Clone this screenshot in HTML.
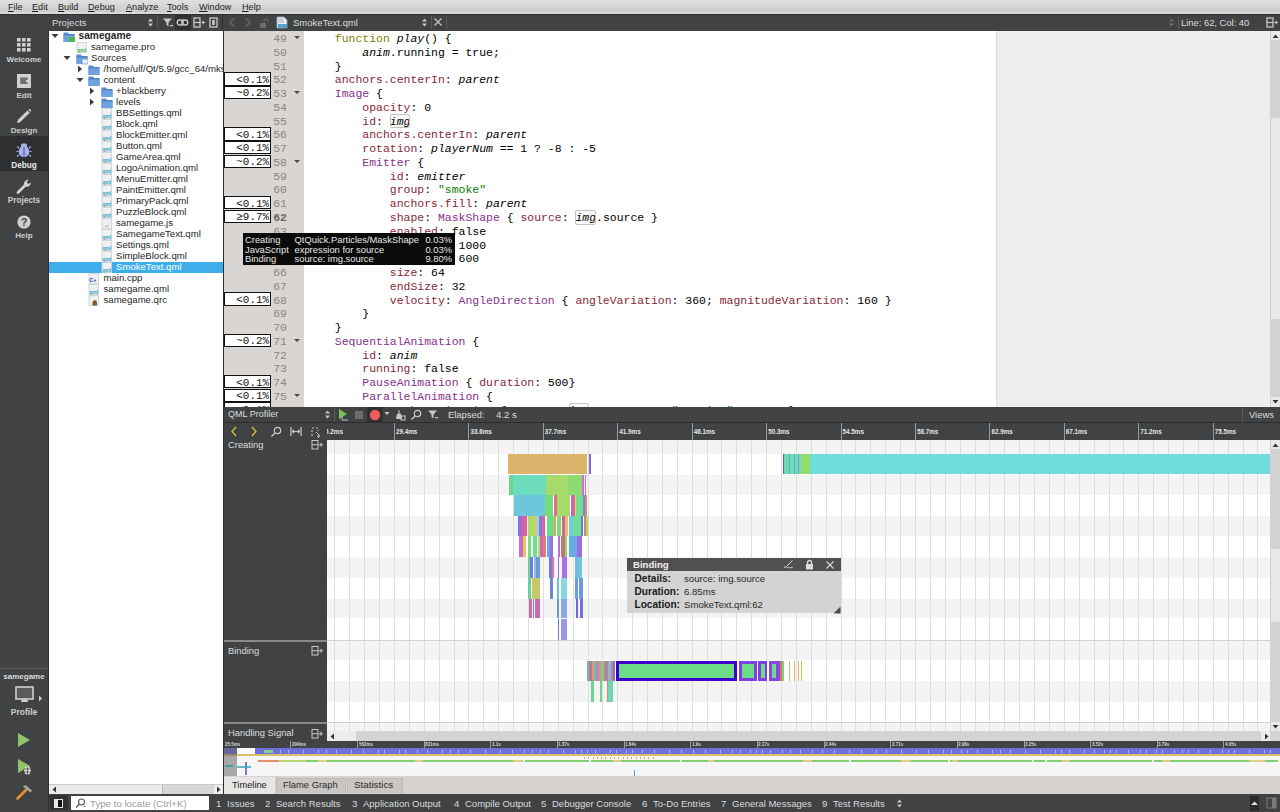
<!DOCTYPE html><html><head><meta charset="utf-8"><title>Qt Creator</title><style>
*{box-sizing:border-box}
html,body{margin:0;padding:0}
body{width:1280px;height:812px;overflow:hidden;position:relative;background:#404244;font-family:"Liberation Sans",sans-serif;font-size:9.5px;color:#000}
.a{position:absolute}
.t{position:absolute;white-space:pre;line-height:1}
.mono{font-family:"Liberation Mono",monospace}
.cl{position:absolute;left:307.3px;white-space:pre;font-family:"Liberation Mono",monospace;font-size:11.46px;line-height:14px;height:14px;color:#000}
.k{color:#808000}.p{color:#8a2636}.ty{color:#87308a}.s{color:#008000}.i{font-style:italic}
.hb{outline:1px solid #c4c4c4;outline-offset:-1px;border-radius:2px;background:#f8f8f8;padding:0.7px 0}
.ann{position:absolute;left:224px;width:47px;border:1px solid #111;background:#fff;font-family:"Liberation Mono",monospace;font-size:10.9px;line-height:11px;text-align:right;padding-right:1px;white-space:pre;color:#111}
.ln{position:absolute;left:271px;width:16px;text-align:right;font-family:"Liberation Mono",monospace;font-size:11.46px;line-height:14px;color:#8a8683}
.fold{position:absolute;left:294px;width:0;height:0;border-left:3.5px solid transparent;border-right:3.5px solid transparent;border-top:3.5px solid #4a4a4a}
.ti{position:absolute;white-space:pre;line-height:1;font-size:9.6px;color:#222}
</style></head><body>
<div class="a" style="left:0px;top:0px;width:1280px;height:14px;background:linear-gradient(#e0e0e0,#cbcbcb 85%,#d9d9d9 85%,#d9d9d9);"></div>
<div class="t" style="left:8px;top:2.6px;font-size:9.1px;color:#1e1e1e;"><u>F</u>ile</div>
<div class="t" style="left:32px;top:2.6px;font-size:9.1px;color:#1e1e1e;"><u>E</u>dit</div>
<div class="t" style="left:58px;top:2.6px;font-size:9.1px;color:#1e1e1e;"><u>B</u>uild</div>
<div class="t" style="left:88px;top:2.6px;font-size:9.1px;color:#1e1e1e;"><u>D</u>ebug</div>
<div class="t" style="left:126px;top:2.6px;font-size:9.1px;color:#1e1e1e;"><u>A</u>nalyze</div>
<div class="t" style="left:167px;top:2.6px;font-size:9.1px;color:#1e1e1e;"><u>T</u>ools</div>
<div class="t" style="left:199px;top:2.6px;font-size:9.1px;color:#1e1e1e;"><u>W</u>indow</div>
<div class="t" style="left:242px;top:2.6px;font-size:9.1px;color:#1e1e1e;"><u>H</u>elp</div>
<div class="a" style="left:0px;top:14px;width:1280px;height:17px;background:#404244;"></div>
<div class="a" style="left:0px;top:14px;width:1280px;height:1px;background:#2e2f30;"></div>
<div class="t" style="left:52px;top:17.8px;font-size:9.6px;color:#d8d8d8;">Projects</div>
<svg class="a" style="left:147px;top:17px;" width="7" height="11" viewBox="0 0 7 11"><path d="M1 4.5 L3.5 1.5 L6 4.5 Z M1 6.5 L3.5 9.5 L6 6.5 Z" fill="#c8c8c8"/></svg>
<div class="a" style="left:157px;top:16px;width:1px;height:13px;background:#5a5c5e;"></div>
<svg class="a" style="left:162px;top:17px;" width="12" height="11" viewBox="0 0 12 11"><path d="M1 1.5 H10 L6.5 5.5 V9.5 L4.5 8 V5.5 Z" fill="#c8c8c8"/><rect x="8" y="8" width="3" height="1.2" fill="#c8c8c8"/></svg>
<div class="a" style="left:175px;top:14px;width:16px;height:16px;background:#2f3031;"></div>
<svg class="a" style="left:176px;top:17px;" width="13" height="11" viewBox="0 0 13 11"><rect x="1.2" y="3" width="6" height="5" rx="2.5" fill="none" stroke="#c8c8c8" stroke-width="1.4"/><rect x="5.8" y="3" width="6" height="5" rx="2.5" fill="none" stroke="#c8c8c8" stroke-width="1.4"/></svg>
<svg class="a" style="left:193px;top:17px;" width="13" height="11" viewBox="0 0 13 11"><rect x="1" y="1" width="6" height="9" fill="none" stroke="#c8c8c8" stroke-width="1.3"/><path d="M1 5.5 H7" stroke="#c8c8c8" stroke-width="1.2"/><path d="M8.5 5.5 H12 M10.2 3.8 V7.2" stroke="#c8c8c8" stroke-width="1.2"/></svg>
<svg class="a" style="left:208px;top:17px;" width="11" height="11" viewBox="0 0 11 11"><rect x="2" y="1" width="7" height="9" fill="none" stroke="#c8c8c8" stroke-width="1.3"/><rect x="4.2" y="3" width="2.6" height="5" fill="#c8c8c8"/></svg>
<div class="a" style="left:222px;top:14px;width:1px;height:17px;background:#2c2d2e;"></div>
<svg class="a" style="left:228px;top:17px;" width="8" height="11" viewBox="0 0 8 11"><path d="M6 1.5 L2 5.5 L6 9.5" fill="none" stroke="#6a6c6e" stroke-width="1.2"/></svg>
<svg class="a" style="left:244px;top:17px;" width="8" height="11" viewBox="0 0 8 11"><path d="M2 1.5 L6 5.5 L2 9.5" fill="none" stroke="#6a6c6e" stroke-width="1.2"/></svg>
<svg class="a" style="left:259px;top:18px;" width="10" height="11" viewBox="0 0 10 11"><rect x="1" y="5" width="6" height="5" fill="#6a6c6e"/><path d="M5 5 V3 A2 2 0 0 1 9 3 V4" fill="none" stroke="#6a6c6e" stroke-width="1.2"/></svg>
<svg class="a" style="left:276px;top:16px;" width="13" height="14" viewBox="0 0 13 14"><path d="M1 1 H8 L11 4 V12 H1 Z" fill="#e8eef4" stroke="#9aa8b4" stroke-width="0.8"/><rect x="2" y="8" width="9" height="4" fill="#5aa0d0"/><rect x="2" y="2" width="6" height="5" fill="#c8d4de"/></svg>
<div class="t" style="left:293px;top:17.8px;font-size:9.5px;color:#dedede;">SmokeText.qml</div>
<svg class="a" style="left:421px;top:17px;" width="7" height="11" viewBox="0 0 7 11"><path d="M1 4.5 L3.5 1.5 L6 4.5 Z M1 6.5 L3.5 9.5 L6 6.5 Z" fill="#c8c8c8"/></svg>
<div class="a" style="left:431px;top:16px;width:1px;height:13px;background:#5a5c5e;"></div>
<svg class="a" style="left:433px;top:17px;" width="10" height="11" viewBox="0 0 10 11"><path d="M1.5 1.5 L8.5 8.5 M8.5 1.5 L1.5 8.5" stroke="#c8c8c8" stroke-width="1.2"/></svg>
<div class="a" style="left:446px;top:16px;width:1px;height:13px;background:#5a5c5e;"></div>
<svg class="a" style="left:1168px;top:17px;" width="7" height="11" viewBox="0 0 7 11"><path d="M1 4.5 L3.5 1.5 L6 4.5 Z M1 6.5 L3.5 9.5 L6 6.5 Z" fill="#6c6e70"/></svg>
<div class="a" style="left:1178px;top:16px;width:1px;height:13px;background:#5a5c5e;"></div>
<div class="t" style="left:1181px;top:17.8px;font-size:9.4px;color:#dedede;">Line: 62, Col: 40</div>
<svg class="a" style="left:1266px;top:17px;" width="13" height="11" viewBox="0 0 13 11"><rect x="1" y="1" width="6" height="9" fill="none" stroke="#c8c8c8" stroke-width="1.3"/><path d="M1 5.5 H7" stroke="#c8c8c8" stroke-width="1.2"/><path d="M8.5 5.5 H12 M10.2 3.8 V7.2" stroke="#c8c8c8" stroke-width="1.2"/></svg>
<div class="a" style="left:48px;top:31px;width:1px;height:781px;background:#2f3031;"></div>
<div class="a" style="left:0px;top:136px;width:48px;height:35px;background:#2e2f30;"></div>
<svg class="a" style="left:17px;top:38px;" width="14" height="14" viewBox="0 0 14 14"><rect x="0" y="0" width="3.6" height="3.6" fill="#d0d0d0"/><rect x="5" y="0" width="3.6" height="3.6" fill="#d0d0d0"/><rect x="10" y="0" width="3.6" height="3.6" fill="#d0d0d0"/><rect x="0" y="5" width="3.6" height="3.6" fill="#d0d0d0"/><rect x="5" y="5" width="3.6" height="3.6" fill="#d0d0d0"/><rect x="10" y="5" width="3.6" height="3.6" fill="#d0d0d0"/><rect x="0" y="10" width="3.6" height="3.6" fill="#d0d0d0"/><rect x="5" y="10" width="3.6" height="3.6" fill="#d0d0d0"/><rect x="10" y="10" width="3.6" height="3.6" fill="#d0d0d0"/></svg>
<div class="t" style="left:0px;top:56px;width:48px;text-align:center;font-size:8px;font-weight:bold;color:#cfcfcf;">Welcome</div>
<svg class="a" style="left:16.5px;top:73.5px;" width="14" height="14" viewBox="0 0 14 14"><rect x="0" y="0" width="14" height="14" fill="#d0d0d0"/><rect x="3.2" y="3.5" width="7.5" height="6.5" fill="#6e6e6e"/><path d="M8 7 L11 5.5 V8.5 Z" fill="#e0e0e0"/></svg>
<div class="t" style="left:0px;top:91.5px;width:48px;text-align:center;font-size:8px;font-weight:bold;color:#cfcfcf;">Edit</div>
<svg class="a" style="left:16px;top:108px;" width="16" height="16" viewBox="0 0 16 16"><path d="M1 15 L1.8 12 L11.5 2.5 L13.8 4.8 L4 14.3 Z" fill="#d0d0d0"/><path d="M12.3 1.7 L13.3 0.7 L15.3 2.7 L14.3 3.7 Z" fill="#d0d0d0"/></svg>
<div class="t" style="left:0px;top:126.5px;width:48px;text-align:center;font-size:8px;font-weight:bold;color:#cfcfcf;">Design</div>
<svg class="a" style="left:16px;top:142px;" width="16" height="16" viewBox="0 0 16 16"><path d="M3 6 L1 4.5 M13 6 L15 4.5 M2.5 9.5 H0.5 M13.5 9.5 H15.5 M3 13 L1 14.5 M13 13 L15 14.5" stroke="#a8b2f0" stroke-width="1.2"/><ellipse cx="8" cy="9.5" rx="5.3" ry="5.8" fill="#a8b2f0"/><ellipse cx="8" cy="3.5" rx="3" ry="2.3" fill="#a8b2f0"/><path d="M8 5 V15.3" stroke="#3a3f80" stroke-width="0.9"/></svg>
<div class="t" style="left:0px;top:161.7px;width:48px;text-align:center;font-size:8.2px;font-weight:bold;color:#e8e8e8;">Debug</div>
<svg class="a" style="left:16px;top:179px;" width="16" height="15" viewBox="0 0 16 15"><path d="M2 13.5 L9.5 6" stroke="#d0d0d0" stroke-width="2.8" stroke-linecap="round"/><path d="M8.2 7 A4.3 4.3 0 0 1 12.5 0.8 L10.8 3.3 L12.3 5 L14.9 3.2 A4.3 4.3 0 0 1 8.2 7 Z" fill="#d0d0d0"/></svg>
<div class="t" style="left:0px;top:197px;width:48px;text-align:center;font-size:8.2px;font-weight:bold;color:#cfcfcf;">Projects</div>
<svg class="a" style="left:17px;top:215px;" width="14" height="14" viewBox="0 0 14 14"><circle cx="7" cy="7" r="6.6" fill="#d0d0d0"/><text x="7" y="11.3" font-family="Liberation Sans" font-size="11" font-weight="bold" text-anchor="middle" fill="#404244">?</text></svg>
<div class="t" style="left:0px;top:231.5px;width:48px;text-align:center;font-size:8px;font-weight:bold;color:#cfcfcf;">Help</div>
<div class="a" style="left:0px;top:668px;width:48px;height:1px;background:#5a5c5e;"></div>
<div class="t" style="left:0px;top:673px;width:48px;text-align:center;font-size:8px;font-weight:bold;color:#dcdcdc;">samegame</div>
<svg class="a" style="left:15px;top:686px;" width="19" height="18" viewBox="0 0 19 18"><rect x="1" y="1" width="17" height="12" fill="#5a5a5a" stroke="#cfcfcf" stroke-width="1.6"/><path d="M7 13 L6 16 H13 L12 13 Z" fill="#cfcfcf"/></svg>
<svg class="a" style="left:38px;top:695px;" width="5" height="7" viewBox="0 0 5 7"><path d="M1 0.5 L4 3.5 L1 6.5 Z" fill="#cfcfcf"/></svg>
<div class="t" style="left:0px;top:708px;width:48px;text-align:center;font-size:8.5px;font-weight:bold;color:#cfcfcf;">Profile</div>
<svg class="a" style="left:17px;top:732px;" width="14" height="16" viewBox="0 0 14 16"><path d="M1 1 L13 8 L1 15 Z" fill="#8fc46a"/></svg>
<svg class="a" style="left:17px;top:758px;" width="16" height="18" viewBox="0 0 16 18"><path d="M1 1 L13 8 L1 15 Z" fill="#8fc46a"/><ellipse cx="10.5" cy="12.5" rx="3.3" ry="4" fill="#e8e8e8"/><path d="M6.5 11 H14.5 M6.5 14 H14.5 M10.5 9 V16.5" stroke="#404244" stroke-width="0.8"/></svg>
<svg class="a" style="left:15px;top:784px;" width="19" height="17" viewBox="0 0 19 17"><path d="M2.5 14.5 L11 6" stroke="#e8922a" stroke-width="2.6" stroke-linecap="round"/><path d="M8 2.5 L10.5 1 L17 6.5 L15.5 8.5 Z" fill="#a8a8a8"/></svg>
<div class="a" style="left:49px;top:31px;width:174px;height:754px;background:#fff;"></div>
<div class="a" style="left:49px;top:31px;width:174px;height:754px;overflow:hidden">
<svg class="a" style="left:1.5px;top:2.4px" width="8" height="6"><path d="M0.5 1 L7.5 1 L4 5 Z" fill="#3c3c3c"/></svg>
<svg class="a" style="left:14.0px;top:-0.1px" width="12" height="12"><path d="M0.5 1.5 H5 L6 3 H11.5 V11 H0.5 Z" fill="#5b8fd0"/><rect x="0.5" y="4" width="11" height="7" fill="#6fa2e0"/><path d="M0.5 4 H11.5" stroke="#3a6aa8" stroke-width="0.6"/><rect x="6" y="6" width="6" height="5" rx="1" fill="#4cb84c"/></svg>
<div class="ti" style="left:29.5px;top:0.2px;font-weight:bold;font-size:10.2px;color:#262626">samegame</div>
<svg class="a" style="left:26.5px;top:10.9px" width="11" height="12"><rect x="1" y="0.5" width="9.5" height="10" fill="#eef0f2" stroke="#cfd3d6" stroke-width="0.9"/><text x="1.3" y="9.6" font-family="Liberation Sans" font-size="5" font-weight="bold" fill="#4cb84c">qml</text></svg>
<div class="ti" style="left:42.0px;top:11.2px;color:#262626">samegame.pro</div>
<svg class="a" style="left:14.0px;top:24.4px" width="8" height="6"><path d="M0.5 1 L7.5 1 L4 5 Z" fill="#3c3c3c"/></svg>
<svg class="a" style="left:26.5px;top:21.9px" width="12" height="12"><path d="M0.5 1.5 H5 L6 3 H11.5 V11 H0.5 Z" fill="#5b8fd0"/><rect x="0.5" y="4" width="11" height="7" fill="#6fa2e0"/><path d="M0.5 4 H11.5" stroke="#3a6aa8" stroke-width="0.6"/><rect x="6" y="6" width="6" height="5" rx="1" fill="#e8f0f8" stroke="#5a8ac0" stroke-width="0.6"/></svg>
<div class="ti" style="left:42.0px;top:22.2px;color:#262626">Sources</div>
<svg class="a" style="left:27.5px;top:34.4px" width="6" height="8"><path d="M1 0.5 L5 4 L1 7.5 Z" fill="#3c3c3c"/></svg>
<svg class="a" style="left:39.0px;top:32.9px" width="12" height="12"><path d="M0.5 1.5 H5 L6 3 H11.5 V11 H0.5 Z" fill="#5b8fd0"/><rect x="0.5" y="4" width="11" height="7" fill="#6fa2e0"/><path d="M0.5 4 H11.5" stroke="#3a6aa8" stroke-width="0.6"/></svg>
<div class="ti" style="left:54.5px;top:33.2px;color:#262626">/home/ulf/Qt/5.9/gcc_64/mkspecs</div>
<svg class="a" style="left:26.5px;top:46.4px" width="8" height="6"><path d="M0.5 1 L7.5 1 L4 5 Z" fill="#3c3c3c"/></svg>
<svg class="a" style="left:39.0px;top:43.9px" width="12" height="12"><path d="M0.5 1.5 H5 L6 3 H11.5 V11 H0.5 Z" fill="#5b8fd0"/><rect x="0.5" y="4" width="11" height="7" fill="#6fa2e0"/><path d="M0.5 4 H11.5" stroke="#3a6aa8" stroke-width="0.6"/></svg>
<div class="ti" style="left:54.5px;top:44.2px;color:#262626">content</div>
<svg class="a" style="left:40.0px;top:56.4px" width="6" height="8"><path d="M1 0.5 L5 4 L1 7.5 Z" fill="#3c3c3c"/></svg>
<svg class="a" style="left:51.5px;top:54.9px" width="12" height="12"><path d="M0.5 1.5 H5 L6 3 H11.5 V11 H0.5 Z" fill="#5b8fd0"/><rect x="0.5" y="4" width="11" height="7" fill="#6fa2e0"/><path d="M0.5 4 H11.5" stroke="#3a6aa8" stroke-width="0.6"/></svg>
<div class="ti" style="left:67.0px;top:55.2px;color:#262626">+blackberry</div>
<svg class="a" style="left:40.0px;top:67.4px" width="6" height="8"><path d="M1 0.5 L5 4 L1 7.5 Z" fill="#3c3c3c"/></svg>
<svg class="a" style="left:51.5px;top:65.9px" width="12" height="12"><path d="M0.5 1.5 H5 L6 3 H11.5 V11 H0.5 Z" fill="#5b8fd0"/><rect x="0.5" y="4" width="11" height="7" fill="#6fa2e0"/><path d="M0.5 4 H11.5" stroke="#3a6aa8" stroke-width="0.6"/></svg>
<div class="ti" style="left:67.0px;top:66.2px;color:#262626">levels</div>
<svg class="a" style="left:51.5px;top:76.9px" width="11" height="12"><rect x="1" y="0.5" width="9.5" height="10" fill="#eef0f2" stroke="#cfd3d6" stroke-width="0.9"/><text x="1.3" y="9.6" font-family="Liberation Sans" font-size="5" font-weight="bold" fill="#3aa0c8">qml</text></svg>
<div class="ti" style="left:67.0px;top:77.2px;color:#262626">BBSettings.qml</div>
<svg class="a" style="left:51.5px;top:87.9px" width="11" height="12"><rect x="1" y="0.5" width="9.5" height="10" fill="#eef0f2" stroke="#cfd3d6" stroke-width="0.9"/><text x="1.3" y="9.6" font-family="Liberation Sans" font-size="5" font-weight="bold" fill="#3aa0c8">qml</text></svg>
<div class="ti" style="left:67.0px;top:88.2px;color:#262626">Block.qml</div>
<svg class="a" style="left:51.5px;top:98.9px" width="11" height="12"><rect x="1" y="0.5" width="9.5" height="10" fill="#eef0f2" stroke="#cfd3d6" stroke-width="0.9"/><text x="1.3" y="9.6" font-family="Liberation Sans" font-size="5" font-weight="bold" fill="#3aa0c8">qml</text></svg>
<div class="ti" style="left:67.0px;top:99.2px;color:#262626">BlockEmitter.qml</div>
<svg class="a" style="left:51.5px;top:109.9px" width="11" height="12"><rect x="1" y="0.5" width="9.5" height="10" fill="#eef0f2" stroke="#cfd3d6" stroke-width="0.9"/><text x="1.3" y="9.6" font-family="Liberation Sans" font-size="5" font-weight="bold" fill="#3aa0c8">qml</text></svg>
<div class="ti" style="left:67.0px;top:110.2px;color:#262626">Button.qml</div>
<svg class="a" style="left:51.5px;top:120.9px" width="11" height="12"><rect x="1" y="0.5" width="9.5" height="10" fill="#eef0f2" stroke="#cfd3d6" stroke-width="0.9"/><text x="1.3" y="9.6" font-family="Liberation Sans" font-size="5" font-weight="bold" fill="#3aa0c8">qml</text></svg>
<div class="ti" style="left:67.0px;top:121.2px;color:#262626">GameArea.qml</div>
<svg class="a" style="left:51.5px;top:131.9px" width="11" height="12"><rect x="1" y="0.5" width="9.5" height="10" fill="#eef0f2" stroke="#cfd3d6" stroke-width="0.9"/><text x="1.3" y="9.6" font-family="Liberation Sans" font-size="5" font-weight="bold" fill="#3aa0c8">qml</text></svg>
<div class="ti" style="left:67.0px;top:132.2px;color:#262626">LogoAnimation.qml</div>
<svg class="a" style="left:51.5px;top:142.9px" width="11" height="12"><rect x="1" y="0.5" width="9.5" height="10" fill="#eef0f2" stroke="#cfd3d6" stroke-width="0.9"/><text x="1.3" y="9.6" font-family="Liberation Sans" font-size="5" font-weight="bold" fill="#3aa0c8">qml</text></svg>
<div class="ti" style="left:67.0px;top:143.2px;color:#262626">MenuEmitter.qml</div>
<svg class="a" style="left:51.5px;top:153.9px" width="11" height="12"><rect x="1" y="0.5" width="9.5" height="10" fill="#eef0f2" stroke="#cfd3d6" stroke-width="0.9"/><text x="1.3" y="9.6" font-family="Liberation Sans" font-size="5" font-weight="bold" fill="#3aa0c8">qml</text></svg>
<div class="ti" style="left:67.0px;top:154.2px;color:#262626">PaintEmitter.qml</div>
<svg class="a" style="left:51.5px;top:164.9px" width="11" height="12"><rect x="1" y="0.5" width="9.5" height="10" fill="#eef0f2" stroke="#cfd3d6" stroke-width="0.9"/><text x="1.3" y="9.6" font-family="Liberation Sans" font-size="5" font-weight="bold" fill="#3aa0c8">qml</text></svg>
<div class="ti" style="left:67.0px;top:165.2px;color:#262626">PrimaryPack.qml</div>
<svg class="a" style="left:51.5px;top:175.9px" width="11" height="12"><rect x="1" y="0.5" width="9.5" height="10" fill="#eef0f2" stroke="#cfd3d6" stroke-width="0.9"/><text x="1.3" y="9.6" font-family="Liberation Sans" font-size="5" font-weight="bold" fill="#3aa0c8">qml</text></svg>
<div class="ti" style="left:67.0px;top:176.2px;color:#262626">PuzzleBlock.qml</div>
<svg class="a" style="left:51.5px;top:186.9px" width="11" height="12"><rect x="1" y="0.5" width="9.5" height="10" fill="#eef0f2" stroke="#cfd3d6" stroke-width="0.9"/><path d="M4 8 Q6 10 8 7" stroke="#999" fill="none" stroke-width="0.8"/></svg>
<div class="ti" style="left:67.0px;top:187.2px;color:#262626">samegame.js</div>
<svg class="a" style="left:51.5px;top:197.9px" width="11" height="12"><rect x="1" y="0.5" width="9.5" height="10" fill="#eef0f2" stroke="#cfd3d6" stroke-width="0.9"/><text x="1.3" y="9.6" font-family="Liberation Sans" font-size="5" font-weight="bold" fill="#3aa0c8">qml</text></svg>
<div class="ti" style="left:67.0px;top:198.2px;color:#262626">SamegameText.qml</div>
<svg class="a" style="left:51.5px;top:208.9px" width="11" height="12"><rect x="1" y="0.5" width="9.5" height="10" fill="#eef0f2" stroke="#cfd3d6" stroke-width="0.9"/><text x="1.3" y="9.6" font-family="Liberation Sans" font-size="5" font-weight="bold" fill="#3aa0c8">qml</text></svg>
<div class="ti" style="left:67.0px;top:209.2px;color:#262626">Settings.qml</div>
<svg class="a" style="left:51.5px;top:219.9px" width="11" height="12"><rect x="1" y="0.5" width="9.5" height="10" fill="#eef0f2" stroke="#cfd3d6" stroke-width="0.9"/><text x="1.3" y="9.6" font-family="Liberation Sans" font-size="5" font-weight="bold" fill="#3aa0c8">qml</text></svg>
<div class="ti" style="left:67.0px;top:220.2px;color:#262626">SimpleBlock.qml</div>
<div class="a" style="left:0;top:231px;width:174px;height:11px;background:#3daee9"></div>
<svg class="a" style="left:51.5px;top:230.9px" width="11" height="12"><rect x="1" y="0.5" width="9.5" height="10" fill="#eef0f2" stroke="#cfd3d6" stroke-width="0.9"/><text x="1.3" y="9.6" font-family="Liberation Sans" font-size="5" font-weight="bold" fill="#3aa0c8">qml</text></svg>
<div class="ti" style="left:67.0px;top:231.2px;color:#fff">SmokeText.qml</div>
<svg class="a" style="left:39.0px;top:241.9px" width="11" height="12"><rect x="1" y="0.5" width="9.5" height="10" fill="#eef0f2" stroke="#cfd3d6" stroke-width="0.9"/><text x="1.3" y="8.5" font-size="5.5" font-family="Liberation Sans" font-weight="bold" fill="#2030c0">C+</text></svg>
<div class="ti" style="left:54.5px;top:242.2px;color:#262626">main.cpp</div>
<svg class="a" style="left:39.0px;top:252.9px" width="11" height="12"><rect x="1" y="0.5" width="9.5" height="10" fill="#eef0f2" stroke="#cfd3d6" stroke-width="0.9"/><text x="1.3" y="9.6" font-family="Liberation Sans" font-size="5" font-weight="bold" fill="#3aa0c8">qml</text></svg>
<div class="ti" style="left:54.5px;top:253.2px;color:#262626">samegame.qml</div>
<svg class="a" style="left:39.0px;top:263.9px" width="11" height="12"><rect x="1" y="0.5" width="9.5" height="10" fill="#eef0f2" stroke="#cfd3d6" stroke-width="0.9"/><path d="M4.5 10.5 V7.5 A2.2 2.2 0 0 1 9 7.5 V10.5 Z" fill="#7a5a2a"/></svg>
<div class="ti" style="left:54.5px;top:264.2px;color:#262626">samegame.qrc</div>
</div>
<div class="a" style="left:223px;top:31px;width:1px;height:763px;background:#2c2d2e;"></div>
<div class="a" style="left:49px;top:784px;width:174px;height:10px;background:#d8d8d8;border-top:1px solid #cacaca;"></div>
<div class="a" style="left:59px;top:785px;width:103.5px;height:9px;background:#ececec;border-right:1px solid #b8b8b8;"></div>
<div class="a" style="left:213.5px;top:785px;width:9.5px;height:9px;background:#eeeeee;"></div>
<div class="a" style="left:49px;top:785px;width:10px;height:9px;background:#ececec;"></div>
<svg class="a" style="left:50px;top:785px;" width="9" height="9" viewBox="0 0 9 9"><path d="M6 1.5 L2.5 4.5 L6 7.5 Z" fill="#333"/></svg>
<svg class="a" style="left:214px;top:785px;" width="9" height="9" viewBox="0 0 9 9"><path d="M3 1.5 L6.5 4.5 L3 7.5 Z" fill="#333"/></svg>
<div class="a" style="left:224px;top:31px;width:80px;height:376px;background:#d9d5d2;"></div>
<div class="a" style="left:304px;top:31px;width:692px;height:376px;background:#fff;"></div>
<div class="a" style="left:996px;top:31px;width:1px;height:376px;background:#dedede;"></div>
<div class="a" style="left:997px;top:31px;width:273px;height:376px;background:#eeeeee;"></div>
<div class="a" style="left:1270px;top:31px;width:10px;height:376px;background:#e8e8e8;border-left:1px solid #d0d0d0;"></div>
<div class="a" style="left:1270px;top:40px;width:10px;height:78px;background:#d2d2d2;"></div>
<div class="a" style="left:1270px;top:319px;width:10px;height:78px;background:#d2d2d2;"></div>
<svg class="a" style="left:1271px;top:32px;" width="9" height="8" viewBox="0 0 9 8"><path d="M1.5 6 L4.5 2.5 L7.5 6 Z" fill="#333"/></svg>
<svg class="a" style="left:1271px;top:398px;" width="9" height="8" viewBox="0 0 9 8"><path d="M1.5 2 L4.5 5.5 L7.5 2 Z" fill="#333"/></svg>
<div class="a" style="left:0;top:31px;width:1270px;height:376px;overflow:hidden">
<div class="cl" style="top:1.00px">    <span class="k">function</span> <span class="i">play</span>() {</div>
<div class="ln" style="top:1.00px">49</div>
<div class="fold" style="top:5.30px"></div>
<div class="cl" style="top:14.77px">        <span class="i">anim</span>.running = true;</div>
<div class="ln" style="top:14.77px">50</div>
<div class="cl" style="top:28.54px">    }</div>
<div class="ln" style="top:28.54px">51</div>
<div class="cl" style="top:42.31px">    <span class="p">anchors.centerIn</span>: <span class="i">parent</span></div>
<div class="ln" style="top:42.31px">52</div>
<div class="ann" style="top:41.01px;height:13.5px;padding-top:1.6px">&lt;0.1%</div>
<div class="cl" style="top:56.08px">    <span class="ty">Image</span> {</div>
<div class="ln" style="top:56.08px">53</div>
<div class="ann" style="top:54.78px;height:13.5px;padding-top:1.6px">~0.2%</div>
<div class="fold" style="top:60.38px"></div>
<div class="cl" style="top:69.85px">        <span class="p">opacity</span>: 0</div>
<div class="ln" style="top:69.85px">54</div>
<div class="cl" style="top:83.62px">        <span class="p">id</span>: <span class="i hb">img</span></div>
<div class="ln" style="top:83.62px">55</div>
<div class="cl" style="top:97.39px">        <span class="p">anchors.centerIn</span>: <span class="i">parent</span></div>
<div class="ln" style="top:97.39px">56</div>
<div class="ann" style="top:96.09px;height:13.5px;padding-top:1.6px">&lt;0.1%</div>
<div class="cl" style="top:111.16px">        <span class="p">rotation</span>: <span class="i">playerNum</span> == 1 ? -8 : -5</div>
<div class="ln" style="top:111.16px">57</div>
<div class="ann" style="top:109.86px;height:13.5px;padding-top:1.6px">&lt;0.1%</div>
<div class="cl" style="top:124.93px">        <span class="ty">Emitter</span> {</div>
<div class="ln" style="top:124.93px">58</div>
<div class="ann" style="top:123.63px;height:13.5px;padding-top:1.6px">~0.2%</div>
<div class="fold" style="top:129.23px"></div>
<div class="cl" style="top:138.70px">            <span class="p">id</span>: <span class="i">emitter</span></div>
<div class="ln" style="top:138.70px">59</div>
<div class="cl" style="top:152.47px">            <span class="p">group</span>: <span class="s">"smoke"</span></div>
<div class="ln" style="top:152.47px">60</div>
<div class="cl" style="top:166.24px">            <span class="p">anchors.fill</span>: <span class="i">parent</span></div>
<div class="ln" style="top:166.24px">61</div>
<div class="ann" style="top:164.94px;height:13.5px;padding-top:1.6px">&lt;0.1%</div>
<div class="cl" style="top:180.01px">            <span class="p">shape</span>: <span class="ty">MaskShape</span> { <span class="p">source</span>: <span class="i hb">img</span>.source }</div>
<div class="ln" style="top:180.01px;font-weight:bold;color:#6a6866">62</div>
<div class="ann" style="top:178.71px;height:13.5px;padding-top:1.6px">≥9.7%</div>
<div class="cl" style="top:193.78px">            <span class="p">enabled</span>: false</div>
<div class="ln" style="top:193.78px">63</div>
<div class="cl" style="top:207.55px">            <span class="p">emitRate</span>: 1000</div>
<div class="ln" style="top:207.55px">64</div>
<div class="cl" style="top:221.32px">            <span class="p">lifeSpan</span>: 600</div>
<div class="ln" style="top:221.32px">65</div>
<div class="cl" style="top:235.09px">            <span class="p">size</span>: 64</div>
<div class="ln" style="top:235.09px">66</div>
<div class="cl" style="top:248.86px">            <span class="p">endSize</span>: 32</div>
<div class="ln" style="top:248.86px">67</div>
<div class="cl" style="top:262.63px">            <span class="p">velocity</span>: <span class="ty">AngleDirection</span> { <span class="p">angleVariation</span>: 360; <span class="p">magnitudeVariation</span>: 160 }</div>
<div class="ln" style="top:262.63px">68</div>
<div class="ann" style="top:261.33px;height:13.5px;padding-top:1.6px">&lt;0.1%</div>
<div class="cl" style="top:276.40px">        }</div>
<div class="ln" style="top:276.40px">69</div>
<div class="cl" style="top:290.17px">    }</div>
<div class="ln" style="top:290.17px">70</div>
<div class="cl" style="top:303.94px">    <span class="ty">SequentialAnimation</span> {</div>
<div class="ln" style="top:303.94px">71</div>
<div class="ann" style="top:302.64px;height:13.5px;padding-top:1.6px">~0.2%</div>
<div class="fold" style="top:308.24px"></div>
<div class="cl" style="top:317.71px">        <span class="p">id</span>: <span class="i">anim</span></div>
<div class="ln" style="top:317.71px">72</div>
<div class="cl" style="top:331.48px">        <span class="p">running</span>: false</div>
<div class="ln" style="top:331.48px">73</div>
<div class="cl" style="top:345.25px">        <span class="ty">PauseAnimation</span> { <span class="p">duration</span>: 500}</div>
<div class="ln" style="top:345.25px">74</div>
<div class="ann" style="top:343.95px;height:13.5px;padding-top:1.6px">&lt;0.1%</div>
<div class="cl" style="top:359.02px">        <span class="ty">ParallelAnimation</span> {</div>
<div class="ln" style="top:359.02px">75</div>
<div class="ann" style="top:357.72px;height:13.5px;padding-top:1.6px">&lt;0.1%</div>
<div class="fold" style="top:363.32px"></div>
<div class="cl" style="top:372.79px">            <span class="ty">NumberAnimation</span> { <span class="p">target</span>: <span class="i hb">img</span>; <span class="p">property</span>: <span class="s">"opacity"</span>; <span class="p">to</span>: 1 }</div>
<div class="ln" style="top:372.79px">76</div>
<div class="ann" style="top:371.49px;height:13.5px;padding-top:1.6px">&lt;0.1%</div>
</div>
<div class="a" style="left:243px;top:233px;width:212px;height:32px;background:#0a0a0a;"></div>
<div class="t" style="left:245px;top:235.0px;font-size:9.4px;color:#e6e6e6;">Creating</div>
<div class="t" style="left:294.5px;top:235.0px;font-size:9.4px;color:#e6e6e6;">QtQuick.Particles/MaskShape</div>
<div class="t" style="left:400px;top:235.0px;font-size:9.4px;color:#e6e6e6;width:52px;text-align:right;">0.03%</div>
<div class="t" style="left:245px;top:244.6px;font-size:9.4px;color:#e6e6e6;">JavaScript</div>
<div class="t" style="left:294.5px;top:244.6px;font-size:9.4px;color:#e6e6e6;">expression for source</div>
<div class="t" style="left:400px;top:244.6px;font-size:9.4px;color:#e6e6e6;width:52px;text-align:right;">0.03%</div>
<div class="t" style="left:245px;top:254.2px;font-size:9.4px;color:#e6e6e6;">Binding</div>
<div class="t" style="left:294.5px;top:254.2px;font-size:9.4px;color:#e6e6e6;">source: img.source</div>
<div class="t" style="left:400px;top:254.2px;font-size:9.4px;color:#e6e6e6;width:52px;text-align:right;">9.80%</div>
<div class="a" style="left:224px;top:407px;width:1056px;height:16px;background:#404244;"></div>
<div class="a" style="left:224px;top:422px;width:1056px;height:1px;background:#2c2d2e;"></div>
<div class="t" style="left:228px;top:410.1px;font-size:9px;color:#dedede;">QML Profiler</div>
<svg class="a" style="left:324px;top:409px;" width="7" height="11" viewBox="0 0 7 11"><path d="M1 4.5 L3.5 1.5 L6 4.5 Z M1 6.5 L3.5 9.5 L6 6.5 Z" fill="#c8c8c8"/></svg>
<div class="a" style="left:334px;top:409px;width:1px;height:12px;background:#5a5c5e;"></div>
<svg class="a" style="left:337px;top:408px;" width="13" height="13" viewBox="0 0 13 13"><path d="M2 1 L10 6 L2 11 Z" fill="#7cc25c"/><path d="M5 12 V8 M5 12 H11" stroke="#bdbdbd" stroke-width="1"/></svg>
<div class="a" style="left:355px;top:411px;width:8px;height:8px;background:#6a6c6e;"></div>
<div class="a" style="left:367px;top:407px;width:16px;height:15px;background:#2f3031;"></div>
<svg class="a" style="left:369px;top:409px;" width="12" height="12" viewBox="0 0 12 12"><circle cx="6" cy="6" r="5.2" fill="#f05a5a"/></svg>
<svg class="a" style="left:384px;top:411px;" width="6" height="5" viewBox="0 0 6 5"><path d="M0.5 1 L5.5 1 L3 4 Z" fill="#c8c8c8"/></svg>
<svg class="a" style="left:394px;top:409px;" width="12" height="12" viewBox="0 0 12 12"><path d="M5 1 V5 M2.5 9.5 L3.5 5 H6.5 L7.5 9.5 Z" stroke="#c8c8c8" fill="#c8c8c8" stroke-width="1"/><rect x="7" y="7" width="4" height="4" fill="none" stroke="#c8c8c8" stroke-width="1"/></svg>
<svg class="a" style="left:410px;top:409px;" width="12" height="12" viewBox="0 0 12 12"><circle cx="7.5" cy="4.5" r="3.2" fill="none" stroke="#c8c8c8" stroke-width="1.2"/><path d="M5.3 6.7 L1.5 10.5" stroke="#c8c8c8" stroke-width="1.3"/></svg>
<svg class="a" style="left:427px;top:409px;" width="12" height="12" viewBox="0 0 12 12"><path d="M1 1.5 H10 L6.5 5.5 V9.5 L4.5 8 V5.5 Z" fill="#c8c8c8"/><rect x="8" y="8" width="3" height="1.2" fill="#c8c8c8"/></svg>
<div class="t" style="left:448px;top:410.1px;font-size:9.4px;color:#dedede;">Elapsed:</div>
<div class="t" style="left:496px;top:410.1px;font-size:9.6px;color:#dedede;">4.2 s</div>
<div class="a" style="left:1242px;top:408px;width:1px;height:14px;background:#5a5c5e;"></div>
<div class="t" style="left:1249px;top:410.1px;font-size:9.4px;color:#dedede;">Views</div>
<div class="a" style="left:224px;top:423px;width:103px;height:308px;background:#404244;"></div>
<svg class="a" style="left:230px;top:426px;" width="8" height="11" viewBox="0 0 8 11"><path d="M6 1 L2 5.5 L6 10" fill="none" stroke="#e0c040" stroke-width="1.3"/></svg>
<svg class="a" style="left:250px;top:426px;" width="8" height="11" viewBox="0 0 8 11"><path d="M2 1 L6 5.5 L2 10" fill="none" stroke="#e0c040" stroke-width="1.3"/></svg>
<svg class="a" style="left:270px;top:426px;" width="12" height="12" viewBox="0 0 12 12"><circle cx="7.5" cy="4.5" r="3.2" fill="none" stroke="#c8c8c8" stroke-width="1.2"/><path d="M5.3 6.7 L1.5 10.5" stroke="#c8c8c8" stroke-width="1.3"/></svg>
<svg class="a" style="left:290px;top:426px;" width="12" height="11" viewBox="0 0 12 11"><path d="M1 1 V10 M11 1 V10 M2.5 5.5 H9.5 M4 4 L2.5 5.5 L4 7 M8 4 L9.5 5.5 L8 7" stroke="#c8c8c8" fill="none" stroke-width="1.2"/></svg>
<svg class="a" style="left:311px;top:427px;" width="10" height="11" viewBox="0 0 10 11"><path d="M1 1 H3 M5 1 H7 M1 3 V5 M1 7 V9 M7 3 V4" stroke="#c8c8c8" stroke-width="1.2"/><path d="M5 5 L9 9 L6.5 9 L8 11" stroke="#c8c8c8" fill="none" stroke-width="1"/></svg>
<div class="t" style="left:228px;top:439.5px;font-size:9.4px;color:#dedede;">Creating</div>
<svg class="a" style="left:311px;top:440.0px;" width="13" height="10" viewBox="0 0 13 10"><rect x="1" y="0.5" width="6" height="8.5" fill="none" stroke="#c8c8c8" stroke-width="1"/><path d="M1 4.75 H7" stroke="#c8c8c8" stroke-width="1"/><path d="M8 4.75 H12 M10 2.75 V6.75" stroke="#c8c8c8" stroke-width="1"/></svg>
<div class="a" style="left:224px;top:640px;width:103px;height:1.5px;background:#8a8a8a;"></div>
<div class="t" style="left:228px;top:645.5px;font-size:9.4px;color:#dedede;">Binding</div>
<svg class="a" style="left:311px;top:646.0px;" width="13" height="10" viewBox="0 0 13 10"><rect x="1" y="0.5" width="6" height="8.5" fill="none" stroke="#c8c8c8" stroke-width="1"/><path d="M1 4.75 H7" stroke="#c8c8c8" stroke-width="1"/><path d="M8 4.75 H12 M10 2.75 V6.75" stroke="#c8c8c8" stroke-width="1"/></svg>
<div class="a" style="left:224px;top:722px;width:103px;height:1.5px;background:#8a8a8a;"></div>
<div class="t" style="left:228px;top:728px;font-size:9.4px;color:#dedede;">Handling Signal</div>
<svg class="a" style="left:311px;top:728.5px;" width="13" height="10" viewBox="0 0 13 10"><rect x="1" y="0.5" width="6" height="8.5" fill="none" stroke="#c8c8c8" stroke-width="1"/><path d="M1 4.75 H7" stroke="#c8c8c8" stroke-width="1"/><path d="M8 4.75 H12 M10 2.75 V6.75" stroke="#c8c8c8" stroke-width="1"/></svg>
<div class="a" style="left:327px;top:423px;width:943px;height:17px;background:#404244;"></div>
<div class="a" style="left:327px;top:423px;width:943px;height:17px;overflow:hidden">
<div class="a" style="left:-7.43px;top:0;width:1px;height:17px;background:#9a9a9a"></div>
<div class="t" style="left:-5.43px;top:6px;font-size:6.3px;font-weight:bold;color:#e8e8e8">25.2ms</div>
<div class="a" style="left:67.00px;top:0;width:1px;height:17px;background:#9a9a9a"></div>
<div class="t" style="left:69.00px;top:6px;font-size:6.3px;font-weight:bold;color:#e8e8e8">29.4ms</div>
<div class="a" style="left:141.43px;top:0;width:1px;height:17px;background:#9a9a9a"></div>
<div class="t" style="left:143.43px;top:6px;font-size:6.3px;font-weight:bold;color:#e8e8e8">33.6ms</div>
<div class="a" style="left:215.86px;top:0;width:1px;height:17px;background:#9a9a9a"></div>
<div class="t" style="left:217.86px;top:6px;font-size:6.3px;font-weight:bold;color:#e8e8e8">37.7ms</div>
<div class="a" style="left:290.29px;top:0;width:1px;height:17px;background:#9a9a9a"></div>
<div class="t" style="left:292.29px;top:6px;font-size:6.3px;font-weight:bold;color:#e8e8e8">41.9ms</div>
<div class="a" style="left:364.72px;top:0;width:1px;height:17px;background:#9a9a9a"></div>
<div class="t" style="left:366.72px;top:6px;font-size:6.3px;font-weight:bold;color:#e8e8e8">46.1ms</div>
<div class="a" style="left:439.15px;top:0;width:1px;height:17px;background:#9a9a9a"></div>
<div class="t" style="left:441.15px;top:6px;font-size:6.3px;font-weight:bold;color:#e8e8e8">50.3ms</div>
<div class="a" style="left:513.58px;top:0;width:1px;height:17px;background:#9a9a9a"></div>
<div class="t" style="left:515.58px;top:6px;font-size:6.3px;font-weight:bold;color:#e8e8e8">54.5ms</div>
<div class="a" style="left:588.01px;top:0;width:1px;height:17px;background:#9a9a9a"></div>
<div class="t" style="left:590.01px;top:6px;font-size:6.3px;font-weight:bold;color:#e8e8e8">58.7ms</div>
<div class="a" style="left:662.44px;top:0;width:1px;height:17px;background:#9a9a9a"></div>
<div class="t" style="left:664.44px;top:6px;font-size:6.3px;font-weight:bold;color:#e8e8e8">62.9ms</div>
<div class="a" style="left:736.87px;top:0;width:1px;height:17px;background:#9a9a9a"></div>
<div class="t" style="left:738.87px;top:6px;font-size:6.3px;font-weight:bold;color:#e8e8e8">67.1ms</div>
<div class="a" style="left:811.30px;top:0;width:1px;height:17px;background:#9a9a9a"></div>
<div class="t" style="left:813.30px;top:6px;font-size:6.3px;font-weight:bold;color:#e8e8e8">71.2ms</div>
<div class="a" style="left:885.73px;top:0;width:1px;height:17px;background:#9a9a9a"></div>
<div class="t" style="left:887.73px;top:6px;font-size:6.3px;font-weight:bold;color:#e8e8e8">75.5ms</div>
</div>
<div class="a" style="left:327px;top:440px;width:943px;height:291px;overflow:hidden;background:#fff">
<div class="a" style="left:0;top:0.4px;width:943px;height:13.6px;background:#f4f4f4"></div>
<div class="a" style="left:0;top:35.0px;width:943px;height:20.2px;background:#f4f4f4"></div>
<div class="a" style="left:0;top:75.9px;width:943px;height:20.4px;background:#f4f4f4"></div>
<div class="a" style="left:0;top:117.0px;width:943px;height:21.1px;background:#f4f4f4"></div>
<div class="a" style="left:0;top:158.6px;width:943px;height:19.9px;background:#f4f4f4"></div>
<div class="a" style="left:0;top:200.4px;width:943px;height:20.1px;background:#f4f4f4"></div>
<div class="a" style="left:0;top:241.0px;width:943px;height:20.6px;background:#f4f4f4"></div>
<div class="a" style="left:0;top:282.0px;width:943px;height:20.0px;background:#f4f4f4"></div>
<div class="a" style="left:7.46px;top:0;width:1px;height:291px;background:#dedede"></div>
<div class="a" style="left:22.34px;top:0;width:1px;height:291px;background:#dedede"></div>
<div class="a" style="left:37.23px;top:0;width:1px;height:291px;background:#dedede"></div>
<div class="a" style="left:52.11px;top:0;width:1px;height:291px;background:#dedede"></div>
<div class="a" style="left:67.00px;top:0;width:1px;height:291px;background:#dedede"></div>
<div class="a" style="left:81.89px;top:0;width:1px;height:291px;background:#dedede"></div>
<div class="a" style="left:96.77px;top:0;width:1px;height:291px;background:#dedede"></div>
<div class="a" style="left:111.66px;top:0;width:1px;height:291px;background:#dedede"></div>
<div class="a" style="left:126.54px;top:0;width:1px;height:291px;background:#dedede"></div>
<div class="a" style="left:141.43px;top:0;width:1px;height:291px;background:#dedede"></div>
<div class="a" style="left:156.32px;top:0;width:1px;height:291px;background:#dedede"></div>
<div class="a" style="left:171.20px;top:0;width:1px;height:291px;background:#dedede"></div>
<div class="a" style="left:186.09px;top:0;width:1px;height:291px;background:#dedede"></div>
<div class="a" style="left:200.97px;top:0;width:1px;height:291px;background:#dedede"></div>
<div class="a" style="left:215.86px;top:0;width:1px;height:291px;background:#dedede"></div>
<div class="a" style="left:230.75px;top:0;width:1px;height:291px;background:#dedede"></div>
<div class="a" style="left:245.63px;top:0;width:1px;height:291px;background:#dedede"></div>
<div class="a" style="left:260.52px;top:0;width:1px;height:291px;background:#dedede"></div>
<div class="a" style="left:275.40px;top:0;width:1px;height:291px;background:#dedede"></div>
<div class="a" style="left:290.29px;top:0;width:1px;height:291px;background:#dedede"></div>
<div class="a" style="left:305.18px;top:0;width:1px;height:291px;background:#dedede"></div>
<div class="a" style="left:320.06px;top:0;width:1px;height:291px;background:#dedede"></div>
<div class="a" style="left:334.95px;top:0;width:1px;height:291px;background:#dedede"></div>
<div class="a" style="left:349.83px;top:0;width:1px;height:291px;background:#dedede"></div>
<div class="a" style="left:364.72px;top:0;width:1px;height:291px;background:#dedede"></div>
<div class="a" style="left:379.61px;top:0;width:1px;height:291px;background:#dedede"></div>
<div class="a" style="left:394.49px;top:0;width:1px;height:291px;background:#dedede"></div>
<div class="a" style="left:409.38px;top:0;width:1px;height:291px;background:#dedede"></div>
<div class="a" style="left:424.26px;top:0;width:1px;height:291px;background:#dedede"></div>
<div class="a" style="left:439.15px;top:0;width:1px;height:291px;background:#dedede"></div>
<div class="a" style="left:454.04px;top:0;width:1px;height:291px;background:#dedede"></div>
<div class="a" style="left:468.92px;top:0;width:1px;height:291px;background:#dedede"></div>
<div class="a" style="left:483.81px;top:0;width:1px;height:291px;background:#dedede"></div>
<div class="a" style="left:498.69px;top:0;width:1px;height:291px;background:#dedede"></div>
<div class="a" style="left:513.58px;top:0;width:1px;height:291px;background:#dedede"></div>
<div class="a" style="left:528.47px;top:0;width:1px;height:291px;background:#dedede"></div>
<div class="a" style="left:543.35px;top:0;width:1px;height:291px;background:#dedede"></div>
<div class="a" style="left:558.24px;top:0;width:1px;height:291px;background:#dedede"></div>
<div class="a" style="left:573.12px;top:0;width:1px;height:291px;background:#dedede"></div>
<div class="a" style="left:588.01px;top:0;width:1px;height:291px;background:#dedede"></div>
<div class="a" style="left:602.90px;top:0;width:1px;height:291px;background:#dedede"></div>
<div class="a" style="left:617.78px;top:0;width:1px;height:291px;background:#dedede"></div>
<div class="a" style="left:632.67px;top:0;width:1px;height:291px;background:#dedede"></div>
<div class="a" style="left:647.55px;top:0;width:1px;height:291px;background:#dedede"></div>
<div class="a" style="left:662.44px;top:0;width:1px;height:291px;background:#dedede"></div>
<div class="a" style="left:677.33px;top:0;width:1px;height:291px;background:#dedede"></div>
<div class="a" style="left:692.21px;top:0;width:1px;height:291px;background:#dedede"></div>
<div class="a" style="left:707.10px;top:0;width:1px;height:291px;background:#dedede"></div>
<div class="a" style="left:721.98px;top:0;width:1px;height:291px;background:#dedede"></div>
<div class="a" style="left:736.87px;top:0;width:1px;height:291px;background:#dedede"></div>
<div class="a" style="left:751.76px;top:0;width:1px;height:291px;background:#dedede"></div>
<div class="a" style="left:766.64px;top:0;width:1px;height:291px;background:#dedede"></div>
<div class="a" style="left:781.53px;top:0;width:1px;height:291px;background:#dedede"></div>
<div class="a" style="left:796.41px;top:0;width:1px;height:291px;background:#dedede"></div>
<div class="a" style="left:811.30px;top:0;width:1px;height:291px;background:#dedede"></div>
<div class="a" style="left:826.19px;top:0;width:1px;height:291px;background:#dedede"></div>
<div class="a" style="left:841.07px;top:0;width:1px;height:291px;background:#dedede"></div>
<div class="a" style="left:855.96px;top:0;width:1px;height:291px;background:#dedede"></div>
<div class="a" style="left:870.84px;top:0;width:1px;height:291px;background:#dedede"></div>
<div class="a" style="left:885.73px;top:0;width:1px;height:291px;background:#dedede"></div>
<div class="a" style="left:900.62px;top:0;width:1px;height:291px;background:#dedede"></div>
<div class="a" style="left:915.50px;top:0;width:1px;height:291px;background:#dedede"></div>
<div class="a" style="left:930.39px;top:0;width:1px;height:291px;background:#dedede"></div>
<div class="a" style="left:0;top:200px;width:943px;height:1px;background:#d0d0d0"></div>
<div class="a" style="left:0;top:282px;width:943px;height:1px;background:#d0d0d0"></div>
<div class="a" style="left:181.0px;top:14.1px;width:78.7px;height:20.4px;background:#dcb46c;"></div>
<div class="a" style="left:261.7px;top:14.1px;width:2.1px;height:20.4px;background:#8a6ad8;"></div>
<div class="a" style="left:182.0px;top:34.5px;width:3.8px;height:20.7px;background:#6ad88e;"></div>
<div class="a" style="left:185.8px;top:34.5px;width:33.0px;height:20.7px;background:#6cdcbc;"></div>
<div class="a" style="left:218.8px;top:34.5px;width:22.2px;height:20.7px;background:#a6da6c;"></div>
<div class="a" style="left:241.0px;top:34.5px;width:14.3px;height:20.7px;background:#8cdc72;"></div>
<div class="a" style="left:255.3px;top:34.5px;width:2.2px;height:20.7px;background:#d46ad8;"></div>
<div class="a" style="left:257.5px;top:34.5px;width:1.7px;height:20.7px;background:#e070a0;"></div>
<div class="a" style="left:187.3px;top:55.2px;width:30.5px;height:20.7px;background:#6cc6dc;"></div>
<div class="a" style="left:217.8px;top:55.2px;width:8.7px;height:20.7px;background:#78d87c;"></div>
<div class="a" style="left:226.5px;top:55.2px;width:3.5px;height:20.7px;background:#e06a8a;"></div>
<div class="a" style="left:230.0px;top:55.2px;width:13.0px;height:20.7px;background:#a6da6c;"></div>
<div class="a" style="left:243.5px;top:55.2px;width:2.0px;height:20.7px;background:#b06ad8;"></div>
<div class="a" style="left:245.5px;top:55.2px;width:2.0px;height:20.7px;background:#e06a8a;"></div>
<div class="a" style="left:247.5px;top:55.2px;width:1.0px;height:20.7px;background:#e0d070;"></div>
<div class="a" style="left:248.5px;top:55.2px;width:7.5px;height:20.7px;background:#78dc90;"></div>
<div class="a" style="left:256.0px;top:55.2px;width:1.5px;height:20.7px;background:#6a8ae0;"></div>
<div class="a" style="left:258.0px;top:55.2px;width:2.0px;height:20.7px;background:#e08a6a;"></div>
<div class="a" style="left:190.9px;top:75.6px;width:3.9px;height:20.7px;background:#8e70dc;"></div>
<div class="a" style="left:194.8px;top:75.6px;width:5.2px;height:20.7px;background:#e0609a;"></div>
<div class="a" style="left:200.6px;top:75.6px;width:4.4px;height:20.7px;background:#a6da6c;"></div>
<div class="a" style="left:205.0px;top:75.6px;width:4.5px;height:20.7px;background:#c8d068;"></div>
<div class="a" style="left:210.0px;top:75.6px;width:2.0px;height:20.7px;background:#a0d0f0;"></div>
<div class="a" style="left:212.0px;top:75.6px;width:3.0px;height:20.7px;background:#7c7ce0;"></div>
<div class="a" style="left:215.0px;top:75.6px;width:3.0px;height:20.7px;background:#e0609e;"></div>
<div class="a" style="left:220.0px;top:75.6px;width:7.0px;height:20.7px;background:#6cdc88;"></div>
<div class="a" style="left:227.0px;top:75.6px;width:2.0px;height:20.7px;background:#e0a060;"></div>
<div class="a" style="left:229.7px;top:75.6px;width:4.8px;height:20.7px;background:#78dc80;"></div>
<div class="a" style="left:234.5px;top:75.6px;width:3.0px;height:20.7px;background:#e0608c;"></div>
<div class="a" style="left:237.5px;top:75.6px;width:3.5px;height:20.7px;background:#e0c070;"></div>
<div class="a" style="left:242.0px;top:75.6px;width:4.0px;height:20.7px;background:#78c8e0;"></div>
<div class="a" style="left:246.0px;top:75.6px;width:8.0px;height:20.7px;background:#70dc98;"></div>
<div class="a" style="left:254.0px;top:75.6px;width:1.6px;height:20.7px;background:#6a7ae0;"></div>
<div class="a" style="left:257.0px;top:75.6px;width:1.5px;height:20.7px;background:#e0806a;"></div>
<div class="a" style="left:258.5px;top:75.6px;width:2.3px;height:20.7px;background:#a0dc70;"></div>
<div class="a" style="left:192.0px;top:96.3px;width:3.7px;height:20.7px;background:#d866c8;"></div>
<div class="a" style="left:195.7px;top:96.3px;width:3.3px;height:20.7px;background:#e0c860;"></div>
<div class="a" style="left:201.0px;top:96.3px;width:3.0px;height:20.7px;background:#78dc80;"></div>
<div class="a" style="left:205.6px;top:96.3px;width:4.4px;height:20.7px;background:#70dc90;"></div>
<div class="a" style="left:211.0px;top:96.3px;width:1.5px;height:20.7px;background:#b0e070;"></div>
<div class="a" style="left:213.0px;top:96.3px;width:3.0px;height:20.7px;background:#d866b8;"></div>
<div class="a" style="left:216.0px;top:96.3px;width:2.5px;height:20.7px;background:#e07880;"></div>
<div class="a" style="left:220.0px;top:96.3px;width:3.0px;height:20.7px;background:#6aa8e0;"></div>
<div class="a" style="left:223.0px;top:96.3px;width:3.0px;height:20.7px;background:#a070e0;"></div>
<div class="a" style="left:230.6px;top:96.3px;width:2.4px;height:20.7px;background:#b070e0;"></div>
<div class="a" style="left:234.0px;top:96.3px;width:3.5px;height:20.7px;background:#c07878;"></div>
<div class="a" style="left:237.5px;top:96.3px;width:2.5px;height:20.7px;background:#90d870;"></div>
<div class="a" style="left:242.0px;top:96.3px;width:7.5px;height:20.7px;background:#6aa8e0;"></div>
<div class="a" style="left:249.5px;top:96.3px;width:5.5px;height:20.7px;background:#9a70e0;"></div>
<div class="a" style="left:201.0px;top:117.0px;width:2.0px;height:21.1px;background:#70d090;"></div>
<div class="a" style="left:203.4px;top:117.0px;width:2.2px;height:21.1px;background:#6a80e0;"></div>
<div class="a" style="left:207.0px;top:117.0px;width:1.6px;height:21.1px;background:#90c0f0;"></div>
<div class="a" style="left:209.0px;top:117.0px;width:4.0px;height:21.1px;background:#6a9ad0;"></div>
<div class="a" style="left:222.0px;top:117.0px;width:2.5px;height:21.1px;background:#7080d0;"></div>
<div class="a" style="left:224.5px;top:117.0px;width:2.5px;height:21.1px;background:#e070a8;"></div>
<div class="a" style="left:230.6px;top:117.0px;width:1.4px;height:21.1px;background:#9a70e0;"></div>
<div class="a" style="left:234.5px;top:117.0px;width:5.5px;height:21.1px;background:#a870e0;"></div>
<div class="a" style="left:248.0px;top:117.0px;width:3.5px;height:21.1px;background:#6ac0d8;"></div>
<div class="a" style="left:251.5px;top:117.0px;width:3.5px;height:21.1px;background:#70c8e0;"></div>
<div class="a" style="left:201.0px;top:138.1px;width:2.8px;height:20.5px;background:#6cd09a;"></div>
<div class="a" style="left:204.7px;top:138.1px;width:8.8px;height:20.5px;background:#c8c868;"></div>
<div class="a" style="left:223.2px;top:138.1px;width:3.2px;height:20.5px;background:#6a8ad0;"></div>
<div class="a" style="left:230.0px;top:138.1px;width:2.0px;height:20.5px;background:#6ac0d8;"></div>
<div class="a" style="left:234.3px;top:138.1px;width:5.5px;height:20.5px;background:#88d8e0;"></div>
<div class="a" style="left:248.0px;top:138.1px;width:3.0px;height:20.5px;background:#6a9ae0;"></div>
<div class="a" style="left:252.0px;top:138.1px;width:3.5px;height:20.5px;background:#6a9ae0;"></div>
<div class="a" style="left:202.0px;top:158.6px;width:3.0px;height:19.9px;background:#c86aa8;"></div>
<div class="a" style="left:205.6px;top:158.6px;width:1.4px;height:19.9px;background:#a070c0;"></div>
<div class="a" style="left:208.0px;top:158.6px;width:5.0px;height:19.9px;background:#c070b0;"></div>
<div class="a" style="left:230.0px;top:158.6px;width:2.0px;height:19.9px;background:#6a9ad0;"></div>
<div class="a" style="left:234.0px;top:158.6px;width:6.0px;height:19.9px;background:#8aa8e0;"></div>
<div class="a" style="left:248.6px;top:158.6px;width:2.9px;height:19.9px;background:#6a6ae0;"></div>
<div class="a" style="left:252.5px;top:158.6px;width:3.0px;height:19.9px;background:#7a6ae0;"></div>
<div class="a" style="left:230.6px;top:178.5px;width:1.4px;height:21.3px;background:#6a78c8;"></div>
<div class="a" style="left:234.3px;top:178.5px;width:5.5px;height:21.3px;background:#9a98e8;"></div>
<div class="a" style="left:455.9px;top:14.1px;width:1.1px;height:20.4px;background:#6060c0;"></div>
<div class="a" style="left:457.0px;top:14.1px;width:5.2px;height:20.4px;background:#6ad8b0;"></div>
<div class="a" style="left:462.2px;top:14.1px;width:0.8px;height:20.4px;background:#58b8a8;"></div>
<div class="a" style="left:463.0px;top:14.1px;width:4.0px;height:20.4px;background:#70d8c0;"></div>
<div class="a" style="left:467.0px;top:14.1px;width:1.0px;height:20.4px;background:#58b8a8;"></div>
<div class="a" style="left:468.0px;top:14.1px;width:2.5px;height:20.4px;background:#70d8c0;"></div>
<div class="a" style="left:470.5px;top:14.1px;width:1.0px;height:20.4px;background:#58b8a8;"></div>
<div class="a" style="left:471.5px;top:14.1px;width:2.0px;height:20.4px;background:#70d8c0;"></div>
<div class="a" style="left:473.5px;top:14.1px;width:9.9px;height:20.4px;background:#92dc6a;"></div>
<div class="a" style="left:483.4px;top:14.1px;width:459.6px;height:20.4px;background:#70dcdc;"></div>
<div class="a" style="left:260.0px;top:220.5px;width:2.5px;height:20.5px;background:#6ab8c8;"></div>
<div class="a" style="left:262.4px;top:220.5px;width:2.5px;height:20.5px;background:#c07888;"></div>
<div class="a" style="left:264.7px;top:220.5px;width:2.5px;height:20.5px;background:#d89a80;"></div>
<div class="a" style="left:267.1px;top:220.5px;width:2.5px;height:20.5px;background:#78c0a8;"></div>
<div class="a" style="left:269.4px;top:220.5px;width:2.5px;height:20.5px;background:#b888b8;"></div>
<div class="a" style="left:271.8px;top:220.5px;width:2.5px;height:20.5px;background:#d89878;"></div>
<div class="a" style="left:274.1px;top:220.5px;width:2.5px;height:20.5px;background:#88c888;"></div>
<div class="a" style="left:276.5px;top:220.5px;width:2.5px;height:20.5px;background:#c08098;"></div>
<div class="a" style="left:278.8px;top:220.5px;width:2.5px;height:20.5px;background:#9a8aa8;"></div>
<div class="a" style="left:281.2px;top:220.5px;width:2.5px;height:20.5px;background:#a0b0c0;"></div>
<div class="a" style="left:283.5px;top:220.5px;width:2.5px;height:20.5px;background:#b080c8;"></div>
<div class="a" style="left:285.9px;top:220.5px;width:2.5px;height:20.5px;background:#8a7898;"></div>
<div class="a" style="left:289.1px;top:220.5px;width:121.2px;height:20.5px;background:#6ddc88;border:3px solid #4000cc;"></div>
<div class="a" style="left:412.1px;top:220.5px;width:17.6px;height:20.5px;background:#6ddc88;border:3px solid #8040e0;"></div>
<div class="a" style="left:430.8px;top:220.5px;width:9.5px;height:20.5px;background:#6ddc88;border:3px solid #8040e0;border-left-width:3.5px;border-right-width:2.5px"></div>
<div class="a" style="left:441.8px;top:220.5px;width:11.4px;height:20.5px;background:#6ddc88;border:3px solid #8848e0;border-right-width:4px"></div>
<div class="a" style="left:453.2px;top:220.5px;width:1.8px;height:20.5px;background:#e07070;"></div>
<div class="a" style="left:455.0px;top:220.5px;width:2.0px;height:20.5px;background:#70d870;"></div>
<div class="a" style="left:461.5px;top:220.5px;width:1.6px;height:20.5px;background:#dcb460;"></div>
<div class="a" style="left:466.5px;top:220.5px;width:1.6px;height:20.5px;background:#dcb460;"></div>
<div class="a" style="left:470.5px;top:220.5px;width:1.6px;height:20.5px;background:#dcb460;"></div>
<div class="a" style="left:473.5px;top:220.5px;width:1.6px;height:20.5px;background:#dcb460;"></div>
<div class="a" style="left:264.3px;top:241.0px;width:2.4px;height:20.6px;background:#6ad88a;"></div>
<div class="a" style="left:273.0px;top:241.0px;width:2.3px;height:20.6px;background:#6ad88a;"></div>
<div class="a" style="left:279.6px;top:241.0px;width:1.1px;height:20.6px;background:#e08a6a;"></div>
<div class="a" style="left:280.7px;top:241.0px;width:5.1px;height:20.6px;background:#6cd8b0;"></div>
</div>
<div class="a" style="left:1270px;top:440px;width:10px;height:291px;background:#e8e8e8;border-left:1px solid #d0d0d0;"></div>
<div class="a" style="left:1270px;top:449px;width:10px;height:100px;background:#d2d2d2;"></div>
<div class="a" style="left:1270px;top:622px;width:10px;height:100px;background:#d2d2d2;"></div>
<svg class="a" style="left:1271px;top:441px;" width="9" height="8" viewBox="0 0 9 8"><path d="M1.5 6 L4.5 2.5 L7.5 6 Z" fill="#333"/></svg>
<svg class="a" style="left:1271px;top:723px;" width="9" height="8" viewBox="0 0 9 8"><path d="M1.5 2 L4.5 5.5 L7.5 2 Z" fill="#333"/></svg>
<div class="a" style="left:327px;top:731px;width:953px;height:10.5px;background:#d4d4d4;"></div>
<div class="a" style="left:327px;top:731px;width:10px;height:10.5px;background:#ececec;"></div>
<div class="a" style="left:337px;top:731px;width:19px;height:10.5px;background:#ececec;"></div>
<div class="a" style="left:1261px;top:731px;width:9px;height:10.5px;background:#ececec;"></div>
<svg class="a" style="left:328px;top:732px;" width="9" height="9" viewBox="0 0 9 9"><path d="M6 1.5 L2.5 4.5 L6 7.5 Z" fill="#333"/></svg>
<svg class="a" style="left:1262px;top:732px;" width="9" height="9" viewBox="0 0 9 9"><path d="M3 1.5 L6.5 4.5 L3 7.5 Z" fill="#333"/></svg>
<div class="a" style="left:627px;top:557.5px;width:214px;height:13.3px;background:#505050;"></div>
<div class="a" style="left:627px;top:570.8px;width:214px;height:42.5px;background:#d3d3d3;"></div>
<div class="t" style="left:633px;top:559.5px;font-size:9.6px;font-weight:bold;color:#f0f0f0;">Binding</div>
<svg class="a" style="left:783px;top:559px;" width="12" height="10" viewBox="0 0 12 10"><path d="M1 8 Q3 9 4 7 L9.5 1.5" stroke="#dcdcdc" fill="none" stroke-width="1"/><path d="M4 8.5 Q7 9.5 10 8" stroke="#dcdcdc" fill="none" stroke-width="0.8"/></svg>
<svg class="a" style="left:805px;top:558.5px;" width="9" height="11" viewBox="0 0 9 11"><rect x="1" y="5" width="7" height="5.5" fill="#dcdcdc"/><path d="M2.5 5 V3.5 A2 2 0 0 1 6.5 3.5 V5" stroke="#dcdcdc" fill="none" stroke-width="1.3"/></svg>
<svg class="a" style="left:825px;top:559.5px;" width="10" height="10" viewBox="0 0 10 10"><path d="M1.5 1.5 L8.5 8.5 M8.5 1.5 L1.5 8.5" stroke="#dcdcdc" stroke-width="1.1"/></svg>
<div class="t" style="left:634.5px;top:574px;font-size:10.1px;font-weight:bold;color:#1a1a1a;">Details:</div>
<div class="t" style="left:684px;top:574px;font-size:9.6px;color:#2a2a2a;">source: img.source</div>
<div class="t" style="left:634.5px;top:587px;font-size:10.1px;font-weight:bold;color:#1a1a1a;">Duration:</div>
<div class="t" style="left:684px;top:587px;font-size:9.6px;color:#2a2a2a;">6.85ms</div>
<div class="t" style="left:634.5px;top:600px;font-size:10.1px;font-weight:bold;color:#1a1a1a;">Location:</div>
<div class="t" style="left:684px;top:600px;font-size:9.6px;color:#2a2a2a;">SmokeText.qml:62</div>
<svg class="a" style="left:833px;top:606px;" width="8" height="8" viewBox="0 0 8 8"><path d="M7.5 0.5 V7.5 H0.5 Z" fill="#4a4a4a"/></svg>
<div class="a" style="left:224px;top:741.4px;width:1056px;height:7px;background:#404244;"></div>
<div class="a" style="left:224px;top:741.4px;width:1056px;height:7px;overflow:hidden">
<div class="t" style="left:1.2px;top:1px;font-size:6px;font-weight:bold;color:#d8d8d8;transform:scale(0.75,0.85);transform-origin:0 0">25.5ms</div>
<div class="a" style="left:66.3px;top:0;width:1px;height:7px;background:#9a9a9a"></div>
<div class="t" style="left:67.8px;top:1px;font-size:6px;font-weight:bold;color:#d8d8d8;transform:scale(0.75,0.85);transform-origin:0 0">294ms</div>
<div class="a" style="left:133.0px;top:0;width:1px;height:7px;background:#9a9a9a"></div>
<div class="t" style="left:134.5px;top:1px;font-size:6px;font-weight:bold;color:#d8d8d8;transform:scale(0.75,0.85);transform-origin:0 0">562ms</div>
<div class="a" style="left:199.6px;top:0;width:1px;height:7px;background:#9a9a9a"></div>
<div class="t" style="left:201.1px;top:1px;font-size:6px;font-weight:bold;color:#d8d8d8;transform:scale(0.75,0.85);transform-origin:0 0">831ms</div>
<div class="a" style="left:266.2px;top:0;width:1px;height:7px;background:#9a9a9a"></div>
<div class="t" style="left:267.8px;top:1px;font-size:6px;font-weight:bold;color:#d8d8d8;transform:scale(0.75,0.85);transform-origin:0 0">1.1s</div>
<div class="a" style="left:332.9px;top:0;width:1px;height:7px;background:#9a9a9a"></div>
<div class="t" style="left:334.4px;top:1px;font-size:6px;font-weight:bold;color:#d8d8d8;transform:scale(0.75,0.85);transform-origin:0 0">1.37s</div>
<div class="a" style="left:399.5px;top:0;width:1px;height:7px;background:#9a9a9a"></div>
<div class="t" style="left:401.0px;top:1px;font-size:6px;font-weight:bold;color:#d8d8d8;transform:scale(0.75,0.85);transform-origin:0 0">1.64s</div>
<div class="a" style="left:466.2px;top:0;width:1px;height:7px;background:#9a9a9a"></div>
<div class="t" style="left:467.7px;top:1px;font-size:6px;font-weight:bold;color:#d8d8d8;transform:scale(0.75,0.85);transform-origin:0 0">1.9s</div>
<div class="a" style="left:532.9px;top:0;width:1px;height:7px;background:#9a9a9a"></div>
<div class="t" style="left:534.4px;top:1px;font-size:6px;font-weight:bold;color:#d8d8d8;transform:scale(0.75,0.85);transform-origin:0 0">2.17s</div>
<div class="a" style="left:599.5px;top:0;width:1px;height:7px;background:#9a9a9a"></div>
<div class="t" style="left:601.0px;top:1px;font-size:6px;font-weight:bold;color:#d8d8d8;transform:scale(0.75,0.85);transform-origin:0 0">2.44s</div>
<div class="a" style="left:666.2px;top:0;width:1px;height:7px;background:#9a9a9a"></div>
<div class="t" style="left:667.7px;top:1px;font-size:6px;font-weight:bold;color:#d8d8d8;transform:scale(0.75,0.85);transform-origin:0 0">2.71s</div>
<div class="a" style="left:732.8px;top:0;width:1px;height:7px;background:#9a9a9a"></div>
<div class="t" style="left:734.3px;top:1px;font-size:6px;font-weight:bold;color:#d8d8d8;transform:scale(0.75,0.85);transform-origin:0 0">2.98s</div>
<div class="a" style="left:799.5px;top:0;width:1px;height:7px;background:#9a9a9a"></div>
<div class="t" style="left:801.0px;top:1px;font-size:6px;font-weight:bold;color:#d8d8d8;transform:scale(0.75,0.85);transform-origin:0 0">3.25s</div>
<div class="a" style="left:866.1px;top:0;width:1px;height:7px;background:#9a9a9a"></div>
<div class="t" style="left:867.6px;top:1px;font-size:6px;font-weight:bold;color:#d8d8d8;transform:scale(0.75,0.85);transform-origin:0 0">3.52s</div>
<div class="a" style="left:932.8px;top:0;width:1px;height:7px;background:#9a9a9a"></div>
<div class="t" style="left:934.2px;top:1px;font-size:6px;font-weight:bold;color:#d8d8d8;transform:scale(0.75,0.85);transform-origin:0 0">3.79s</div>
<div class="a" style="left:999.4px;top:0;width:1px;height:7px;background:#9a9a9a"></div>
<div class="t" style="left:1000.9px;top:1px;font-size:6px;font-weight:bold;color:#d8d8d8;transform:scale(0.75,0.85);transform-origin:0 0">4.05s</div>
</div>
<div class="a" style="left:224px;top:748.3px;width:1056px;height:27.7px;background:#f6f6f6;"></div>
<div class="a" style="left:224px;top:748.3px;width:1056px;height:5.5px;background:#7070dc;"></div>
<div class="a" style="left:237px;top:748.3px;width:18px;height:5.5px;background:#fafafa;"></div>
<div class="a" style="left:264px;top:749.5px;width:9px;height:3.5px;background:#8ad08a;"></div>
<div class="a" style="left:224px;top:753.8px;width:1056px;height:2.2px;background:#d6c06a;"></div>
<div class="a" style="left:280px;top:749.5px;width:1px;height:3px;background:#b4b4f0;"></div>
<div class="a" style="left:288px;top:749.5px;width:1px;height:3px;background:#b4b4f0;"></div>
<div class="a" style="left:303px;top:749.5px;width:1px;height:3px;background:#b4b4f0;"></div>
<div class="a" style="left:318px;top:749.5px;width:1px;height:3px;background:#b4b4f0;"></div>
<div class="a" style="left:326px;top:749.5px;width:1px;height:3px;background:#b4b4f0;"></div>
<div class="a" style="left:336px;top:749.5px;width:1px;height:3px;background:#b4b4f0;"></div>
<div class="a" style="left:351px;top:749.5px;width:1px;height:3px;background:#b4b4f0;"></div>
<div class="a" style="left:363px;top:749.5px;width:1px;height:3px;background:#b4b4f0;"></div>
<div class="a" style="left:378px;top:749.5px;width:1px;height:3px;background:#b4b4f0;"></div>
<div class="a" style="left:384px;top:749.5px;width:1px;height:3px;background:#b4b4f0;"></div>
<div class="a" style="left:399px;top:749.5px;width:1px;height:3px;background:#b4b4f0;"></div>
<div class="a" style="left:405px;top:749.5px;width:1px;height:3px;background:#b4b4f0;"></div>
<div class="a" style="left:417px;top:749.5px;width:1px;height:3px;background:#b4b4f0;"></div>
<div class="a" style="left:427px;top:749.5px;width:1px;height:3px;background:#b4b4f0;"></div>
<div class="a" style="left:442px;top:749.5px;width:1px;height:3px;background:#b4b4f0;"></div>
<div class="a" style="left:450px;top:749.5px;width:1px;height:3px;background:#b4b4f0;"></div>
<div class="a" style="left:458px;top:749.5px;width:1px;height:3px;background:#b4b4f0;"></div>
<div class="a" style="left:470px;top:749.5px;width:1px;height:3px;background:#b4b4f0;"></div>
<div class="a" style="left:485px;top:749.5px;width:1px;height:3px;background:#b4b4f0;"></div>
<div class="a" style="left:500px;top:749.5px;width:1px;height:3px;background:#b4b4f0;"></div>
<div class="a" style="left:512px;top:749.5px;width:1px;height:3px;background:#b4b4f0;"></div>
<div class="a" style="left:524px;top:749.5px;width:1px;height:3px;background:#b4b4f0;"></div>
<div class="a" style="left:532px;top:749.5px;width:1px;height:3px;background:#b4b4f0;"></div>
<div class="a" style="left:540px;top:749.5px;width:1px;height:3px;background:#b4b4f0;"></div>
<div class="a" style="left:548px;top:749.5px;width:1px;height:3px;background:#b4b4f0;"></div>
<div class="a" style="left:563px;top:749.5px;width:1px;height:3px;background:#b4b4f0;"></div>
<div class="a" style="left:575px;top:749.5px;width:1px;height:3px;background:#b4b4f0;"></div>
<div class="a" style="left:581px;top:749.5px;width:1px;height:3px;background:#b4b4f0;"></div>
<div class="a" style="left:587px;top:749.5px;width:1px;height:3px;background:#b4b4f0;"></div>
<div class="a" style="left:595px;top:749.5px;width:1px;height:3px;background:#b4b4f0;"></div>
<div class="a" style="left:610px;top:749.5px;width:1px;height:3px;background:#b4b4f0;"></div>
<div class="a" style="left:616px;top:749.5px;width:1px;height:3px;background:#b4b4f0;"></div>
<div class="a" style="left:626px;top:749.5px;width:1px;height:3px;background:#b4b4f0;"></div>
<div class="a" style="left:632px;top:749.5px;width:1px;height:3px;background:#b4b4f0;"></div>
<div class="a" style="left:642px;top:749.5px;width:1px;height:3px;background:#b4b4f0;"></div>
<div class="a" style="left:654px;top:749.5px;width:1px;height:3px;background:#b4b4f0;"></div>
<div class="a" style="left:669px;top:749.5px;width:1px;height:3px;background:#b4b4f0;"></div>
<div class="a" style="left:681px;top:749.5px;width:1px;height:3px;background:#b4b4f0;"></div>
<div class="a" style="left:693px;top:749.5px;width:1px;height:3px;background:#b4b4f0;"></div>
<div class="a" style="left:705px;top:749.5px;width:1px;height:3px;background:#b4b4f0;"></div>
<div class="a" style="left:720px;top:749.5px;width:1px;height:3px;background:#b4b4f0;"></div>
<div class="a" style="left:732px;top:749.5px;width:1px;height:3px;background:#b4b4f0;"></div>
<div class="a" style="left:740px;top:749.5px;width:1px;height:3px;background:#b4b4f0;"></div>
<div class="a" style="left:750px;top:749.5px;width:1px;height:3px;background:#b4b4f0;"></div>
<div class="a" style="left:756px;top:749.5px;width:1px;height:3px;background:#b4b4f0;"></div>
<div class="a" style="left:762px;top:749.5px;width:1px;height:3px;background:#b4b4f0;"></div>
<div class="a" style="left:770px;top:749.5px;width:1px;height:3px;background:#b4b4f0;"></div>
<div class="a" style="left:782px;top:749.5px;width:1px;height:3px;background:#b4b4f0;"></div>
<div class="a" style="left:790px;top:749.5px;width:1px;height:3px;background:#b4b4f0;"></div>
<div class="a" style="left:800px;top:749.5px;width:1px;height:3px;background:#b4b4f0;"></div>
<div class="a" style="left:812px;top:749.5px;width:1px;height:3px;background:#b4b4f0;"></div>
<div class="a" style="left:822px;top:749.5px;width:1px;height:3px;background:#b4b4f0;"></div>
<div class="a" style="left:834px;top:749.5px;width:1px;height:3px;background:#b4b4f0;"></div>
<div class="a" style="left:849px;top:749.5px;width:1px;height:3px;background:#b4b4f0;"></div>
<div class="a" style="left:861px;top:749.5px;width:1px;height:3px;background:#b4b4f0;"></div>
<div class="a" style="left:876px;top:749.5px;width:1px;height:3px;background:#b4b4f0;"></div>
<div class="a" style="left:886px;top:749.5px;width:1px;height:3px;background:#b4b4f0;"></div>
<div class="a" style="left:901px;top:749.5px;width:1px;height:3px;background:#b4b4f0;"></div>
<div class="a" style="left:916px;top:749.5px;width:1px;height:3px;background:#b4b4f0;"></div>
<div class="a" style="left:928px;top:749.5px;width:1px;height:3px;background:#b4b4f0;"></div>
<div class="a" style="left:943px;top:749.5px;width:1px;height:3px;background:#b4b4f0;"></div>
<div class="a" style="left:951px;top:749.5px;width:1px;height:3px;background:#b4b4f0;"></div>
<div class="a" style="left:961px;top:749.5px;width:1px;height:3px;background:#b4b4f0;"></div>
<div class="a" style="left:967px;top:749.5px;width:1px;height:3px;background:#b4b4f0;"></div>
<div class="a" style="left:977px;top:749.5px;width:1px;height:3px;background:#b4b4f0;"></div>
<div class="a" style="left:992px;top:749.5px;width:1px;height:3px;background:#b4b4f0;"></div>
<div class="a" style="left:1000px;top:749.5px;width:1px;height:3px;background:#b4b4f0;"></div>
<div class="a" style="left:1010px;top:749.5px;width:1px;height:3px;background:#b4b4f0;"></div>
<div class="a" style="left:1025px;top:749.5px;width:1px;height:3px;background:#b4b4f0;"></div>
<div class="a" style="left:1040px;top:749.5px;width:1px;height:3px;background:#b4b4f0;"></div>
<div class="a" style="left:1055px;top:749.5px;width:1px;height:3px;background:#b4b4f0;"></div>
<div class="a" style="left:1061px;top:749.5px;width:1px;height:3px;background:#b4b4f0;"></div>
<div class="a" style="left:1069px;top:749.5px;width:1px;height:3px;background:#b4b4f0;"></div>
<div class="a" style="left:1084px;top:749.5px;width:1px;height:3px;background:#b4b4f0;"></div>
<div class="a" style="left:1094px;top:749.5px;width:1px;height:3px;background:#b4b4f0;"></div>
<div class="a" style="left:1104px;top:749.5px;width:1px;height:3px;background:#b4b4f0;"></div>
<div class="a" style="left:1110px;top:749.5px;width:1px;height:3px;background:#b4b4f0;"></div>
<div class="a" style="left:1116px;top:749.5px;width:1px;height:3px;background:#b4b4f0;"></div>
<div class="a" style="left:1128px;top:749.5px;width:1px;height:3px;background:#b4b4f0;"></div>
<div class="a" style="left:1140px;top:749.5px;width:1px;height:3px;background:#b4b4f0;"></div>
<div class="a" style="left:1146px;top:749.5px;width:1px;height:3px;background:#b4b4f0;"></div>
<div class="a" style="left:1156px;top:749.5px;width:1px;height:3px;background:#b4b4f0;"></div>
<div class="a" style="left:1162px;top:749.5px;width:1px;height:3px;background:#b4b4f0;"></div>
<div class="a" style="left:1174px;top:749.5px;width:1px;height:3px;background:#b4b4f0;"></div>
<div class="a" style="left:1182px;top:749.5px;width:1px;height:3px;background:#b4b4f0;"></div>
<div class="a" style="left:1188px;top:749.5px;width:1px;height:3px;background:#b4b4f0;"></div>
<div class="a" style="left:1198px;top:749.5px;width:1px;height:3px;background:#b4b4f0;"></div>
<div class="a" style="left:1210px;top:749.5px;width:1px;height:3px;background:#b4b4f0;"></div>
<div class="a" style="left:1222px;top:749.5px;width:1px;height:3px;background:#b4b4f0;"></div>
<div class="a" style="left:1228px;top:749.5px;width:1px;height:3px;background:#b4b4f0;"></div>
<div class="a" style="left:1234px;top:749.5px;width:1px;height:3px;background:#b4b4f0;"></div>
<div class="a" style="left:1249px;top:749.5px;width:1px;height:3px;background:#b4b4f0;"></div>
<div class="a" style="left:1264px;top:749.5px;width:1px;height:3px;background:#b4b4f0;"></div>
<div class="a" style="left:1270px;top:749.5px;width:1px;height:3px;background:#b4b4f0;"></div>
<div class="a" style="left:258px;top:760.4px;width:21px;height:1.9px;background:#e0906a;"></div>
<div class="a" style="left:279px;top:760.4px;width:27px;height:1.9px;background:#b8d870;"></div>
<div class="a" style="left:306px;top:760.4px;width:12px;height:1.9px;background:#80d070;"></div>
<div class="a" style="left:318px;top:760.4px;width:9px;height:1.9px;background:#d8d880;"></div>
<div class="a" style="left:327px;top:760.4px;width:951px;height:1.9px;background:#84d070;"></div>
<div class="a" style="left:415px;top:760.4px;width:8px;height:1.9px;background:#e2cc88;"></div>
<div class="a" style="left:513px;top:760.4px;width:9px;height:1.9px;background:#e2cc88;"></div>
<div class="a" style="left:613px;top:760.4px;width:8px;height:1.9px;background:#e2cc88;"></div>
<div class="a" style="left:708px;top:760.4px;width:6px;height:1.9px;background:#e2cc88;"></div>
<div class="a" style="left:803px;top:760.4px;width:9px;height:1.9px;background:#e2cc88;"></div>
<div class="a" style="left:901px;top:760.4px;width:10px;height:1.9px;background:#e2cc88;"></div>
<div class="a" style="left:952px;top:760.4px;width:6px;height:1.9px;background:#e2cc88;"></div>
<div class="a" style="left:1062px;top:760.4px;width:8px;height:1.9px;background:#e2cc88;"></div>
<div class="a" style="left:1162px;top:760.4px;width:8px;height:1.9px;background:#e2cc88;"></div>
<div class="a" style="left:1249px;top:760.4px;width:16px;height:1.9px;background:#e2cc88;"></div>
<div class="a" style="left:523px;top:760.4px;width:2px;height:1.9px;background:#f6f6f6;"></div>
<div class="a" style="left:589px;top:760.4px;width:2px;height:1.9px;background:#f6f6f6;"></div>
<div class="a" style="left:680px;top:760.4px;width:2px;height:1.9px;background:#f6f6f6;"></div>
<div class="a" style="left:849px;top:760.4px;width:2px;height:1.9px;background:#f6f6f6;"></div>
<div class="a" style="left:948px;top:760.4px;width:2px;height:1.9px;background:#f6f6f6;"></div>
<div class="a" style="left:1032px;top:760.4px;width:2px;height:1.9px;background:#f6f6f6;"></div>
<div class="a" style="left:1045px;top:760.4px;width:2px;height:1.9px;background:#f6f6f6;"></div>
<div class="a" style="left:1152px;top:760.4px;width:2px;height:1.9px;background:#f6f6f6;"></div>
<div class="a" style="left:584px;top:756.6px;width:1.3px;height:2px;background:#e0a050;"></div>
<div class="a" style="left:588px;top:756.6px;width:1.3px;height:2px;background:#e0a050;"></div>
<div class="a" style="left:593px;top:756.6px;width:1.3px;height:2px;background:#e0a050;"></div>
<div class="a" style="left:597px;top:756.6px;width:1.3px;height:2px;background:#e0a050;"></div>
<div class="a" style="left:601px;top:756.6px;width:1.3px;height:2px;background:#e0a050;"></div>
<div class="a" style="left:605px;top:756.6px;width:1.3px;height:2px;background:#e0a050;"></div>
<div class="a" style="left:610px;top:756.6px;width:1.3px;height:2px;background:#e0a050;"></div>
<div class="a" style="left:614px;top:756.6px;width:1.3px;height:2px;background:#e0a050;"></div>
<div class="a" style="left:618px;top:756.6px;width:1.3px;height:2px;background:#e0a050;"></div>
<div class="a" style="left:623px;top:756.6px;width:1.3px;height:2px;background:#e0a050;"></div>
<div class="a" style="left:627px;top:756.6px;width:1.3px;height:2px;background:#e0a050;"></div>
<div class="a" style="left:631px;top:756.6px;width:1.3px;height:2px;background:#e0a050;"></div>
<div class="a" style="left:636px;top:756.6px;width:1.3px;height:2px;background:#e0a050;"></div>
<div class="a" style="left:640px;top:756.6px;width:1.3px;height:2px;background:#e0a050;"></div>
<div class="a" style="left:644px;top:756.6px;width:1.3px;height:2px;background:#e0a050;"></div>
<div class="a" style="left:648px;top:756.6px;width:1.3px;height:2px;background:#e0a050;"></div>
<div class="a" style="left:653px;top:756.6px;width:1.3px;height:2px;background:#e0a050;"></div>
<div class="a" style="left:634px;top:770px;width:1.2px;height:6px;background:#5a9ad0;"></div>
<div class="a" style="left:224px;top:748.3px;width:13px;height:27.7px;background:rgba(90,90,90,0.5);"></div>
<div class="a" style="left:225px;top:765px;width:8px;height:1.5px;background:#40a0a0;"></div>
<div class="a" style="left:237px;top:766px;width:14px;height:1.5px;background:#60c0c0;"></div>
<div class="a" style="left:245px;top:762px;width:1.5px;height:13px;background:#6a80d0;"></div>
<div class="a" style="left:224px;top:775.5px;width:1056px;height:1px;background:#c8c8c8;"></div>
<div class="a" style="left:224px;top:776px;width:1056px;height:18px;background:#d6d2d0;"></div>
<div class="a" style="left:224px;top:777px;width:51px;height:17px;background:#e8e6e4;"></div>
<div class="a" style="left:275.5px;top:777.5px;width:70px;height:15px;background:#cac6c3;border:1px solid #bdb9b6;border-bottom:none;"></div>
<div class="a" style="left:346.5px;top:777.5px;width:56px;height:15px;background:#cac6c3;border:1px solid #bdb9b6;border-bottom:none;"></div>
<div class="t" style="left:232px;top:780.5px;font-size:9.3px;color:#222;">Timeline</div>
<div class="t" style="left:283px;top:779.5px;font-size:9.4px;color:#2a2a2a;">Flame Graph</div>
<div class="t" style="left:354px;top:779.5px;font-size:9.8px;color:#2a2a2a;">Statistics</div>
<div class="a" style="left:49px;top:794px;width:1231px;height:18px;background:#404244;"></div>
<div class="a" style="left:50px;top:795px;width:18px;height:15px;background:#2f3031;"></div>
<svg class="a" style="left:54px;top:799px;" width="9" height="9" viewBox="0 0 9 9"><rect x="0" y="0" width="9" height="9" fill="#e8e8e8"/><rect x="4" y="1" width="4" height="7" fill="#111"/></svg>
<div class="a" style="left:71px;top:796px;width:138px;height:14px;background:#fff;"></div>
<svg class="a" style="left:75px;top:798px;" width="11" height="10" viewBox="0 0 11 10"><circle cx="6.5" cy="4" r="3" fill="none" stroke="#555" stroke-width="1.1"/><path d="M4.5 6 L1 9.5" stroke="#555" stroke-width="1.2"/><path d="M8.5 8.5 H10.5" stroke="#555" stroke-width="0.9"/></svg>
<div class="t" style="left:90px;top:798.5px;font-size:9.7px;color:#9a9a9a;">Type to locate (Ctrl+K)</div>
<div class="t" style="left:216px;top:798.5px;font-size:9.6px;color:#dcdcdc;">1</div>
<div class="t" style="left:227px;top:798.5px;font-size:9.5px;color:#dcdcdc;">Issues</div>
<div class="t" style="left:265px;top:798.5px;font-size:9.6px;color:#dcdcdc;">2</div>
<div class="t" style="left:276px;top:798.5px;font-size:9.5px;color:#dcdcdc;">Search Results</div>
<div class="t" style="left:352px;top:798.5px;font-size:9.6px;color:#dcdcdc;">3</div>
<div class="t" style="left:363px;top:798.5px;font-size:9.5px;color:#dcdcdc;">Application Output</div>
<div class="t" style="left:454px;top:798.5px;font-size:9.6px;color:#dcdcdc;">4</div>
<div class="t" style="left:465px;top:798.5px;font-size:9.5px;color:#dcdcdc;">Compile Output</div>
<div class="t" style="left:541px;top:798.5px;font-size:9.6px;color:#dcdcdc;">5</div>
<div class="t" style="left:552px;top:798.5px;font-size:9.5px;color:#dcdcdc;">Debugger Console</div>
<div class="t" style="left:642px;top:798.5px;font-size:9.6px;color:#dcdcdc;">6</div>
<div class="t" style="left:653px;top:798.5px;font-size:9.5px;color:#dcdcdc;">To-Do Entries</div>
<div class="t" style="left:721px;top:798.5px;font-size:9.6px;color:#dcdcdc;">7</div>
<div class="t" style="left:732px;top:798.5px;font-size:9.5px;color:#dcdcdc;">General Messages</div>
<div class="t" style="left:822px;top:798.5px;font-size:9.6px;color:#dcdcdc;">9</div>
<div class="t" style="left:833px;top:798.5px;font-size:9.5px;color:#dcdcdc;">Test Results</div>
<svg class="a" style="left:896px;top:798px;" width="7" height="11" viewBox="0 0 7 11"><path d="M1 4.5 L3.5 1.5 L6 4.5 Z M1 6.5 L3.5 9.5 L6 6.5 Z" fill="#c8c8c8"/></svg>
<div class="a" style="left:1250px;top:796px;width:9px;height:15px;background:#2a2b2c;"></div>
<svg class="a" style="left:1250px;top:800px;" width="9" height="6" viewBox="0 0 9 6"><path d="M1 5 L4.5 1.5 L8 5 Z" fill="#e0e0e0"/></svg>
<svg class="a" style="left:1266px;top:797px;" width="11" height="12" viewBox="0 0 11 12"><rect x="1" y="1" width="9" height="10" fill="none" stroke="#7a7a7a" stroke-width="1"/><rect x="6" y="1" width="4" height="10" fill="#7a7a7a"/></svg>
</body></html>
